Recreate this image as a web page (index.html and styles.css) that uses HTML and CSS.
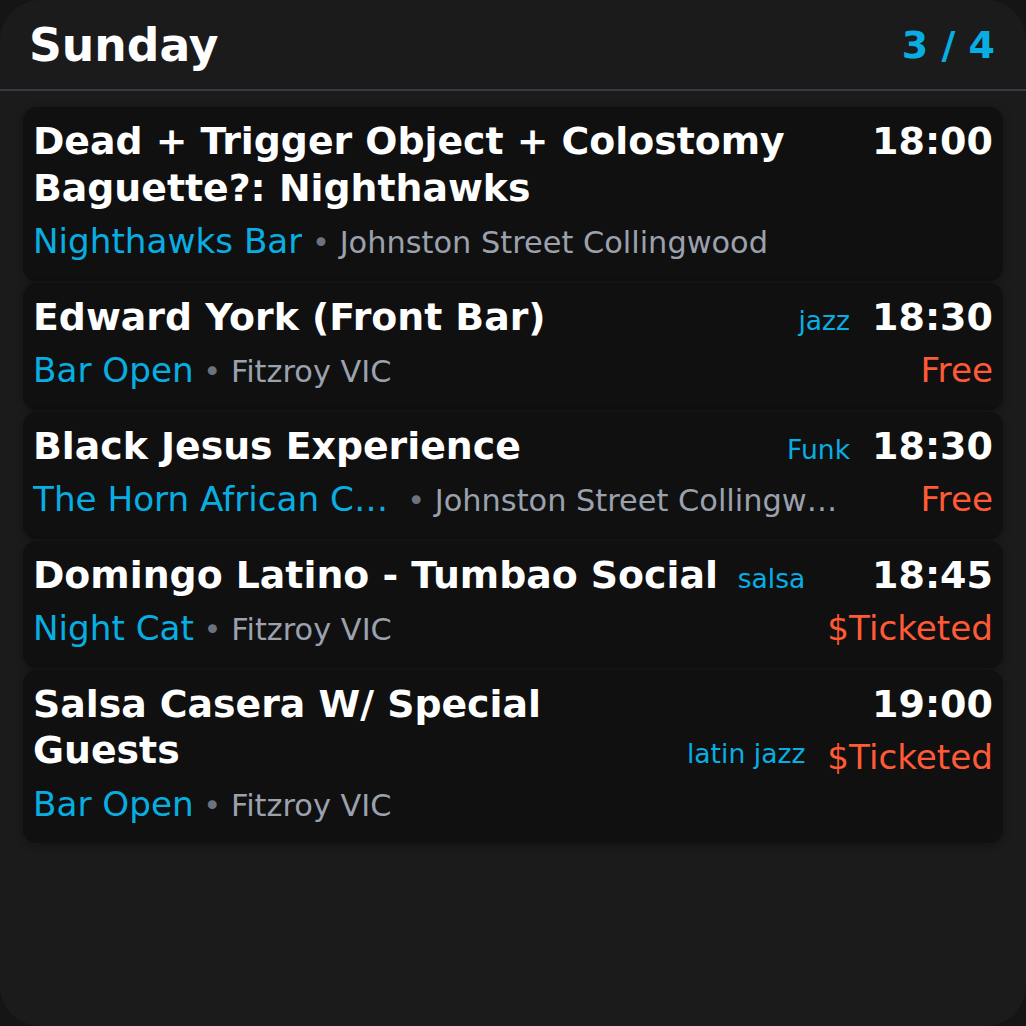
FILE: index.html
```html
<!DOCTYPE html>
<html lang="en">
<head>
<meta charset="utf-8">
<title>Sunday</title>
<link rel="stylesheet" href="styles.css">
</head>
<body>
<div class="app">
  <header class="header">
    <h1 class="day">Sunday</h1>
    <div class="counter">3 / 4</div>
  </header>
  <main class="list">
    <article class="card">
      <div class="main">
        <div class="title-row">
          <h2 class="title">Dead + Trigger Object + Colostomy Baguette?: Nighthawks</h2>
        </div>
        <div class="meta">
          <span class="venue">Nighthawks Bar</span>
          <span class="loc"><span class="dot"> • </span>Johnston Street Collingwood</span>
        </div>
      </div>
      <div class="side">
        <div class="time">18:00</div>
      </div>
    </article>
    <article class="card">
      <div class="main">
        <div class="title-row">
          <h2 class="title">Edward York (Front Bar)</h2>
          <span class="tag">jazz</span>
        </div>
        <div class="meta">
          <span class="venue">Bar Open</span>
          <span class="loc"><span class="dot"> • </span>Fitzroy VIC</span>
        </div>
      </div>
      <div class="side">
        <div class="time">18:30</div>
        <div class="price">Free</div>
      </div>
    </article>
    <article class="card">
      <div class="main">
        <div class="title-row">
          <h2 class="title">Black Jesus Experience</h2>
          <span class="tag">Funk</span>
        </div>
        <div class="meta">
          <span class="venue">The Horn African Cafe</span>
          <span class="loc"><span class="dot"> • </span>Johnston Street Collingwood</span>
        </div>
      </div>
      <div class="side">
        <div class="time">18:30</div>
        <div class="price">Free</div>
      </div>
    </article>
    <article class="card">
      <div class="main">
        <div class="title-row">
          <h2 class="title">Domingo Latino - Tumbao Social</h2>
          <span class="tag">salsa</span>
        </div>
        <div class="meta">
          <span class="venue">Night Cat</span>
          <span class="loc"><span class="dot"> • </span>Fitzroy VIC</span>
        </div>
      </div>
      <div class="side">
        <div class="time">18:45</div>
        <div class="price">$Ticketed</div>
      </div>
    </article>
    <article class="card">
      <div class="main">
        <div class="title-row">
          <h2 class="title">Salsa Casera W/ Special Guests</h2>
          <span class="tag">latin jazz</span>
        </div>
        <div class="meta">
          <span class="venue">Bar Open</span>
          <span class="loc"><span class="dot"> • </span>Fitzroy VIC</span>
        </div>
      </div>
      <div class="side">
        <div class="time">19:00</div>
        <div class="price">$Ticketed</div>
      </div>
    </article>
  </main>
</div>
</body>
</html>
```
FILE: styles.css
```css
html, body {
  margin: 0;
  padding: 0;
  background: #151515;
}

body {
  font-family: "DejaVu Sans", sans-serif;
  color: #ffffff;
}

.app {
  width: 1026px;
  height: 1026px;
  box-sizing: border-box;
  background: #1b1b1b;
  border-radius: 40px;
  overflow: hidden;
}

.header {
  display: flex;
  align-items: flex-start;
  justify-content: space-between;
  padding: 20px 31px 17px 29px;
  border-bottom: 2px solid #363b45;
}

.day {
  margin: 0;
  font-size: 45.6px;
  font-weight: 700;
  line-height: 52px;
  color: #ffffff;
}

.counter {
  margin-top: 3px;
  font-size: 38px;
  font-weight: 700;
  color: #08aee2;
}

.list {
  display: flex;
  flex-direction: column;
  gap: 2px;
  padding: 16px 23px;
}

.card {
  display: flex;
  gap: 22px;
  padding: 11px 10px 15.5px 10px;
  background: #101010;
  border-radius: 14px;
  box-shadow: 0 2px 8px rgba(0, 0, 0, 0.3);
}

.main {
  flex: 1;
  min-width: 0;
  display: flex;
  flex-direction: column;
  gap: 8px;
}

.title-row {
  display: flex;
  align-items: flex-end;
  align-items: last baseline;
  justify-content: space-between;
  gap: 12px;
}

.title {
  margin: 0;
  font-size: 37.8px;
  font-weight: 700;
  line-height: 46.5px;
  color: #ffffff;
}

.tag {
  flex: none;
  font-size: 26.6px;
  color: #08aee2;
  white-space: nowrap;
}

.meta {
  display: flex;
  align-items: baseline;
  min-width: 0;
  line-height: 44px;
  white-space: nowrap;
}

.venue {
  min-width: 0;
  overflow: hidden;
  text-overflow: ellipsis;
  font-size: 34.2px;
  color: #08aee2;
}

.loc {
  min-width: 0;
  overflow: hidden;
  text-overflow: ellipsis;
  font-size: 30.4px;
  color: #9ba1ad;
  white-space: pre;
}

.dot {
  color: #6b7280;
}

.side {
  flex: none;
  display: flex;
  flex-direction: column;
  align-items: flex-end;
  gap: 8px;
}

.time {
  font-size: 38px;
  font-weight: 700;
  line-height: 46.5px;
  color: #ffffff;
}

.price {
  font-size: 34.2px;
  line-height: 44px;
  color: #ff5a36;
  white-space: nowrap;
}
```
